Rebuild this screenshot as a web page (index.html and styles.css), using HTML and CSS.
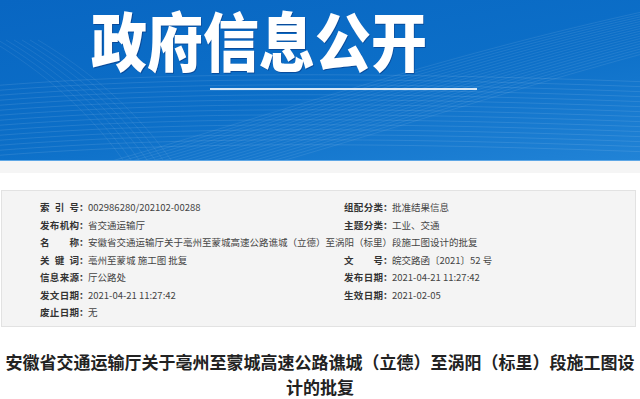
FILE: index.html
```html
<!DOCTYPE html>
<html lang="zh-CN">
<head>
<meta charset="utf-8">
<title>政府信息公开</title>
<link rel="stylesheet" href="styles.css">
</head>
<body>
<header class="banner">
  <svg class="banner-lines" width="640" height="160" viewBox="0 0 640 160" aria-hidden="true">
    <defs>
      <path id="wave-a" d="M-10,96 C140,84 330,80 650,92" fill="none"/>
      <path id="wave-b" d="M80,170 C260,120 420,60 660,8" fill="none"/>
      <path id="wave-c" d="M-10,40 C40,70 90,110 130,170" fill="none"/>
    </defs>
    <g class="lines-a">
      <use href="#wave-a" y="0"/><use href="#wave-a" y="5"/><use href="#wave-a" y="10"/>
      <use href="#wave-a" y="15"/><use href="#wave-a" y="20"/><use href="#wave-a" y="25"/>
      <use href="#wave-a" y="30"/><use href="#wave-a" y="35"/><use href="#wave-a" y="40"/>
      <use href="#wave-a" y="45"/><use href="#wave-a" y="50"/><use href="#wave-a" y="55"/>
      <use href="#wave-a" y="60"/><use href="#wave-a" y="-5"/><use href="#wave-a" y="-10"/>
    </g>
    <g class="lines-b">
      <use href="#wave-b" x="0"/><use href="#wave-b" x="10"/><use href="#wave-b" x="20"/>
      <use href="#wave-b" x="30"/><use href="#wave-b" x="40"/><use href="#wave-b" x="50"/>
      <use href="#wave-b" x="60"/><use href="#wave-b" x="70"/><use href="#wave-b" x="80"/>
      <use href="#wave-b" x="90"/><use href="#wave-b" x="100"/><use href="#wave-b" x="110"/>
      <use href="#wave-b" x="120"/><use href="#wave-b" x="130"/><use href="#wave-b" x="140"/>
      <use href="#wave-b" x="150"/><use href="#wave-b" x="160"/><use href="#wave-b" x="170"/>
    </g>
    <g class="lines-c">
      <use href="#wave-c" x="0"/><use href="#wave-c" x="8"/><use href="#wave-c" x="16"/>
      <use href="#wave-c" x="24"/><use href="#wave-c" x="32"/><use href="#wave-c" x="40"/>
      <use href="#wave-c" x="48"/>
    </g>
  </svg>
  <h1 class="banner-title">政府信息公开</h1>
  <div class="banner-rule"></div>
</header>
<div class="strip"></div>

<main class="content">
  <section class="meta">
    <div class="item"><span class="lbl">索引号</span><span class="colon">：</span><span class="val">002986280/202102-00288</span></div>
    <div class="item"><span class="lbl">组配分类</span><span class="colon">：</span><span class="val">批准结果信息</span></div>
    <div class="item"><span class="lbl">发布机构</span><span class="colon">：</span><span class="val">省交通运输厅</span></div>
    <div class="item"><span class="lbl">主题分类</span><span class="colon">：</span><span class="val">工业、交通</span></div>
    <div class="item wide"><span class="lbl">名称</span><span class="colon">：</span><span class="val">安徽省交通运输厅关于亳州至蒙城高速公路谯城（立德）至涡阳（标里）段施工图设计的批复</span></div>
    <div class="item"><span class="lbl">关键词</span><span class="colon">：</span><span class="val">亳州至蒙城 施工图 批复</span></div>
    <div class="item"><span class="lbl">文号</span><span class="colon">：</span><span class="val">皖交路函〔2021〕52 号</span></div>
    <div class="item"><span class="lbl">信息来源</span><span class="colon">：</span><span class="val">厅公路处</span></div>
    <div class="item"><span class="lbl">发布日期</span><span class="colon">：</span><span class="val">2021-04-21 11:27:42</span></div>
    <div class="item"><span class="lbl">发文日期</span><span class="colon">：</span><span class="val">2021-04-21 11:27:42</span></div>
    <div class="item"><span class="lbl">生效日期</span><span class="colon">：</span><span class="val">2021-02-05</span></div>
    <div class="item"><span class="lbl">废止日期</span><span class="colon">：</span><span class="val">无</span></div>
  </section>

  <h2 class="doc-title">安徽省交通运输厅关于亳州至蒙城高速公路谯城（立德）至涡阳（标里）段施工图设计的批复</h2>
</main>
</body>
</html>
```

FILE: styles.css
```css
* {
  box-sizing: border-box;
}

html, body {
  margin: 0;
  padding: 0;
  background: #fff;
  font-family: "Noto Sans CJK SC", "Noto Sans", sans-serif;
  color: #333;
}

/* Blue header band */
.banner {
  position: relative;
  height: 161px;
  background: linear-gradient(170deg, #0866c2 0%, #0c6fc8 55%, #2183d6 100%);
  border-bottom: 1px solid #5ea7e6;
}

.banner-lines {
  position: absolute;
  left: 0;
  top: 0;
}

.banner-lines use {
  stroke: #ffffff;
  stroke-width: 0.6;
}

.lines-a { opacity: 0.16; }
.lines-b { opacity: 0.14; }
.lines-c { opacity: 0.12; }

/* Condensed headline: narrowed horizontally instead of negative tracking */
.banner-title {
  position: relative;
  margin: 0;
  padding-top: 2px;
  font-size: 64px;
  line-height: 72px;
  font-weight: 900;
  color: #fff;
  transform: translateX(91px) scaleX(0.875);
  transform-origin: 0 0;
  text-shadow: 1px 1px 0 rgba(10, 50, 120, 0.55);
}

.banner-rule {
  position: relative;
  margin: 14px 0 0 210px;
  width: 267px;
  height: 2px;
  background: #d6e7f7;
}

/* Pale band under the header */
.strip {
  height: 12px;
  background: #f5f5f5;
}

.content {
  padding-top: 17px;
}

/* Document metadata panel */
.meta {
  display: grid;
  grid-template-columns: 304px 1fr;
  margin: 0 4px 0 1px;
  padding: 8px 0 4px 38px;
  background: #f4f4f4;
  border: 1px solid #e2e2e2;
  font-size: 9.5px;
  line-height: 17.5px;
}

.item {
  display: flex;
  white-space: nowrap;
}

.item.wide {
  grid-column: 1 / -1;
}

.lbl {
  width: 39px;
  font-weight: 700;
  color: #333;
  text-align: justify;
  text-align-last: justify;
}

.colon {
  font-weight: 700;
  width: 9px;
  color: #333;
}

.val {
  color: #444;
}

/* Article heading */
.doc-title {
  margin: 22px 0 0;
  padding: 0 4px;
  text-align: center;
  font-size: 17px;
  line-height: 25px;
  font-weight: 700;
  color: #222;
}
```
